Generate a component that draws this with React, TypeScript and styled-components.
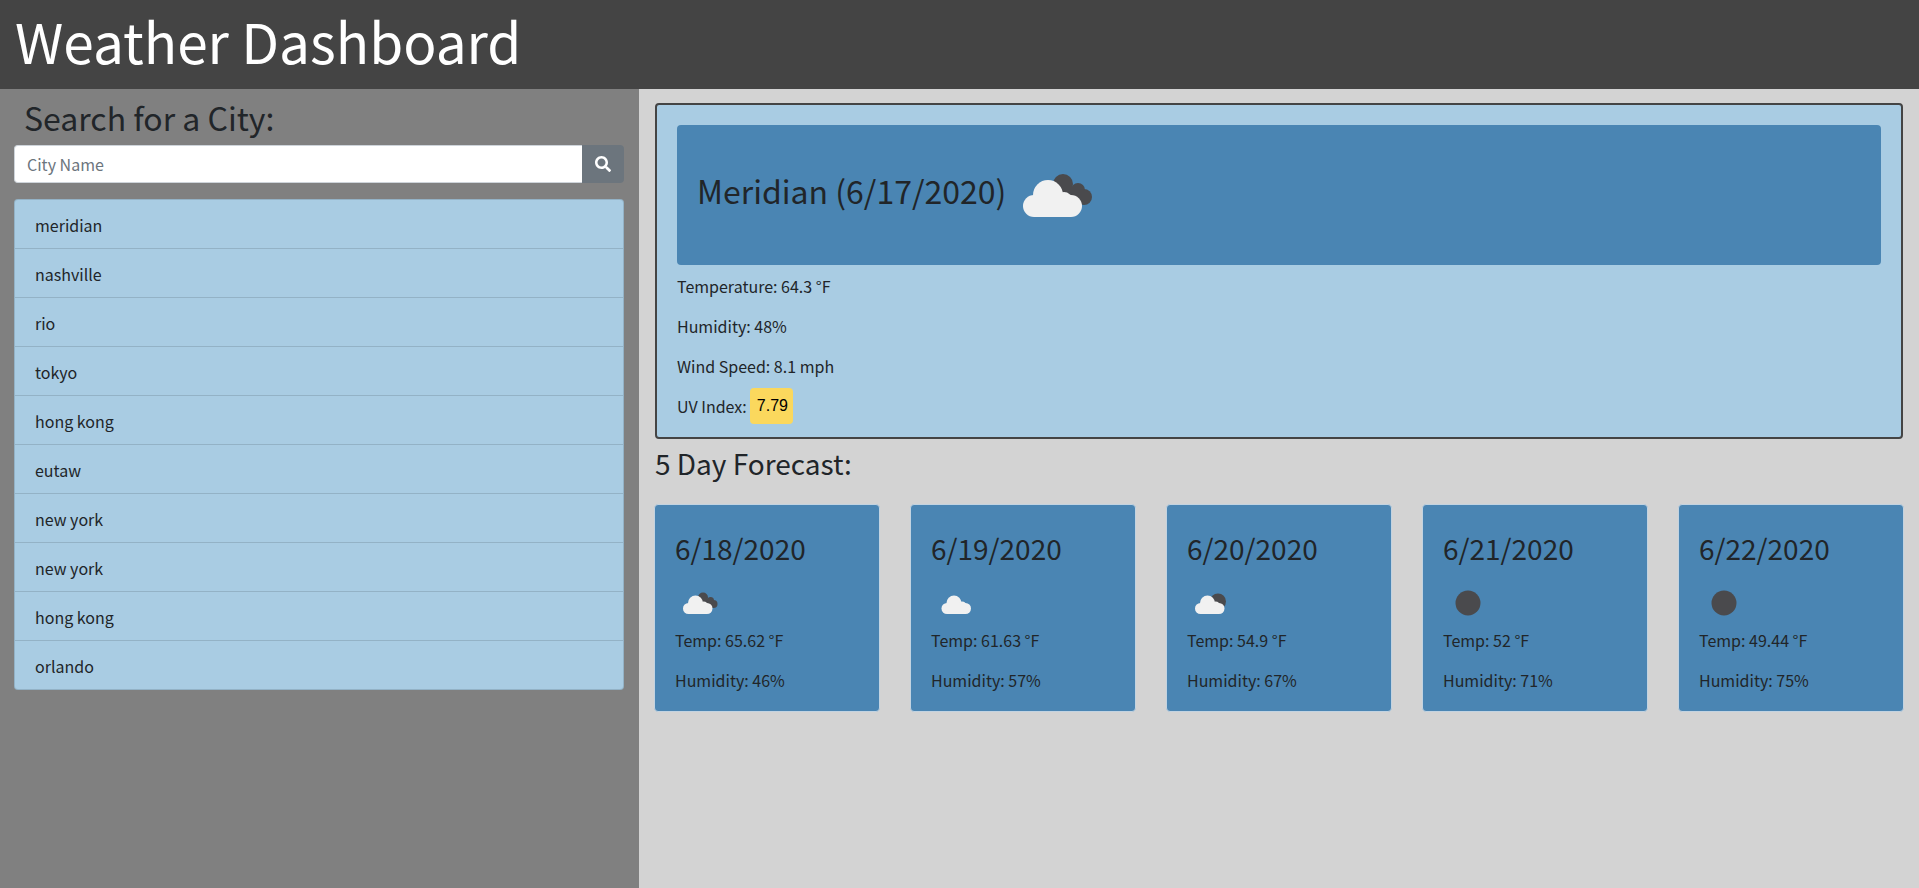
import React from "react";
import styled, { createGlobalStyle } from "styled-components";
import { FaSearch } from "react-icons/fa";

const GlobalStyle = createGlobalStyle`
  html, body {
    margin: 0;
    padding: 0;
    height: 100%;
  }
  body {
    font-family: "Noto Sans CJK SC", "Noto Sans", sans-serif;
    font-size: 16px;
    line-height: 24px;
    color: #212529;
    background: #d3d3d3;
  }
  * {
    box-sizing: border-box;
  }
`;

const Page = styled.div`
  display: flex;
  flex-direction: column;
  height: 888px;
  overflow: hidden;
`;
const Header = styled.header`
  height: 89px;
  flex: none;
  background: #444444;
  padding: 0 15px;
`;
const Title = styled.h1`
  margin: 0;
  font-size: 55px;
  font-weight: 400;
  line-height: 80px;
  color: #fff;
`;
const Body = styled.div`
  flex: 1;
  display: flex;
`;
const Sidebar = styled.aside`
  width: 639px;
  flex: none;
  background: #808080;
  padding: 7px 15px 0 14px;
`;
const SearchTitle = styled.h3`
  margin: 0 0 6px 10px;
  font-size: 32px;
  font-weight: 400;
  line-height: 43px;
`;
const SearchRow = styled.div`
  display: flex;
  height: 38px;
  margin-bottom: 16px;
`;
const SearchInput = styled.input`
  flex: 1;
  min-width: 0;
  border: 1px solid #ced4da;
  border-right: 0;
  border-radius: 4px 0 0 4px;
  padding: 0 12px;
  font: inherit;
  background: #fff;
  &::placeholder {
    color: #6c757d;
    opacity: 1;
  }
`;
const SearchButton = styled.button`
  width: 42px;
  border: 0;
  border-radius: 0 4px 4px 0;
  background: #6c757d;
  color: #fff;
  font-size: 16px;
  display: flex;
  align-items: center;
  justify-content: center;
  padding: 0 1px 0 0;
`;
const CityList = styled.ul`
  list-style: none;
  margin: 0;
  padding: 0;
  border: 1px solid rgba(0, 0, 0, 0.125);
  border-radius: 4px;
  background: #a9cce3;
`;
const CityItem = styled.li`
  padding: 13px 20px 11px;
  height: 49px;
  border-bottom: 1px solid rgba(0, 0, 0, 0.125);
  &:last-child {
    border-bottom: 0;
    height: 48px;
  }
`;
const Main = styled.main`
  flex: 1;
  background: #d3d3d3;
  padding: 14px 16px 0 16px;
`;
const CurrentCard = styled.section`
  height: 336px;
  border: 2px solid #444444;
  border-radius: 4px;
  background: #a9cce3;
  padding: 20px 20px 0;
`;
const Banner = styled.div`
  height: 140px;
  display: flex;
  align-items: center;
  background: #4a85b3;
  border-radius: 4px;
  padding: 0 20px;
  margin-bottom: 9px;
`;
const CityTitle = styled.h2`
  margin: 0 1px 0 0;
  padding-bottom: 10px;
  font-size: 32px;
  font-weight: 400;
  line-height: 40px;
`;
const Stat = styled.p`
  margin: 0 0 16px;
`;
const UvRow = styled.div`
  display: flex;
  align-items: center;
  height: 36px;
  margin-top: -6px;
`;
const UvBadge = styled.span`
  margin-left: 3px;
  padding: 0 5px 0 7px;
  height: 36px;
  display: flex;
  align-items: center;
  background: #fbd85d;
  border-radius: 4px;
  color: #000;
  font-family: "Liberation Sans", Arial, sans-serif;
`;
const ForecastTitle = styled.h4`
  margin: 10px 0 26px;
  font-size: 28px;
  font-weight: 400;
  line-height: 29px;
`;
const ForecastRow = styled.div`
  display: flex;
  justify-content: space-between;
  margin: 0 -1px;
`;
const DayCard = styled.article`
  width: 226px;
  height: 208px;
  background: #4a85b3;
  border: 1px solid #c2d3e1;
  border-radius: 4px;
  padding: 26px 20px 0;
`;
const DayTitle = styled.h3`
  margin: 0 0 13px;
  font-size: 28px;
  font-weight: 400;
  line-height: 34px;
`;
const DayStat = styled.p`
  margin: 0 0 16px;
`;
const IconBox = styled.svg<{ $size: number }>`
  display: block;
  flex: none;
  width: ${(p) => p.$size}px;
  height: ${(p) => p.$size}px;
`;

type IconKind = "broken" | "scattered" | "few" | "clear";

const WhiteCloud = ({ shift = 0 }: { shift?: number }) => (
  <g fill="#f1f1f1" transform={`translate(${shift} 0)`}>
    <circle cx="41" cy="50" r="15" />
    <circle cx="27" cy="61" r="11" />
    <circle cx="64" cy="61" r="11" />
    <circle cx="57" cy="55" r="8" />
    <rect x="27" y="50" width="37" height="22" />
  </g>
);

const WeatherIcon = ({ kind, size }: { kind: IconKind; size: number }) => (
  <IconBox $size={size} viewBox="0 0 100 100">
    {kind === "clear" && <circle cx="50" cy="50" r="25" fill="#4a4a4d" />}
    {kind === "few" && <circle cx="62" cy="47" r="16" fill="#4a4a4d" />}
    {kind === "broken" && (
      <g fill="#4a4a4d">
        <circle cx="56" cy="39" r="10" />
        <circle cx="71" cy="45" r="7" />
        <circle cx="77" cy="52" r="8" />
        <rect x="56" y="42" width="16" height="14" />
      </g>
    )}
    {kind !== "clear" && <WhiteCloud shift={kind === "scattered" ? 5 : 0} />}
  </IconBox>
);

const cities = [
  "meridian",
  "nashville",
  "rio",
  "tokyo",
  "hong kong",
  "eutaw",
  "new york",
  "new york",
  "hong kong",
  "orlando",
];

const days: { date: string; temp: string; humidity: string; icon: IconKind }[] = [
  { date: "6/18/2020", temp: "65.62", humidity: "46", icon: "broken" },
  { date: "6/19/2020", temp: "61.63", humidity: "57", icon: "scattered" },
  { date: "6/20/2020", temp: "54.9", humidity: "67", icon: "few" },
  { date: "6/21/2020", temp: "52", humidity: "71", icon: "clear" },
  { date: "6/22/2020", temp: "49.44", humidity: "75", icon: "clear" },
];

export default function App() {
  return (
    <>
      <GlobalStyle />
      <Page>
        <Header>
          <Title>Weather Dashboard</Title>
        </Header>
        <Body>
          <Sidebar>
            <SearchTitle>Search for a City:</SearchTitle>
            <SearchRow>
              <SearchInput placeholder="City Name" />
              <SearchButton aria-label="search">
                <FaSearch />
              </SearchButton>
            </SearchRow>
            <CityList>
              {cities.map((city, i) => (
                <CityItem key={i}>{city}</CityItem>
              ))}
            </CityList>
          </Sidebar>
          <Main>
            <CurrentCard>
              <Banner>
                <CityTitle>Meridian (6/17/2020)</CityTitle>
                <WeatherIcon kind="broken" size={100} />
              </Banner>
              <Stat>Temperature: 64.3 °F</Stat>
              <Stat>Humidity: 48%</Stat>
              <Stat>Wind Speed: 8.1 mph</Stat>
              <UvRow>
                UV Index:
                <UvBadge>7.79</UvBadge>
              </UvRow>
            </CurrentCard>
            <ForecastTitle>5 Day Forecast:</ForecastTitle>
            <ForecastRow>
              {days.map((day) => (
                <DayCard key={day.date}>
                  <DayTitle>{day.date}</DayTitle>
                  <WeatherIcon kind={day.icon} size={50} />
                  <DayStat>Temp: {day.temp} °F</DayStat>
                  <DayStat>Humidity: {day.humidity}%</DayStat>
                </DayCard>
              ))}
            </ForecastRow>
          </Main>
        </Body>
      </Page>
    </>
  );
}
